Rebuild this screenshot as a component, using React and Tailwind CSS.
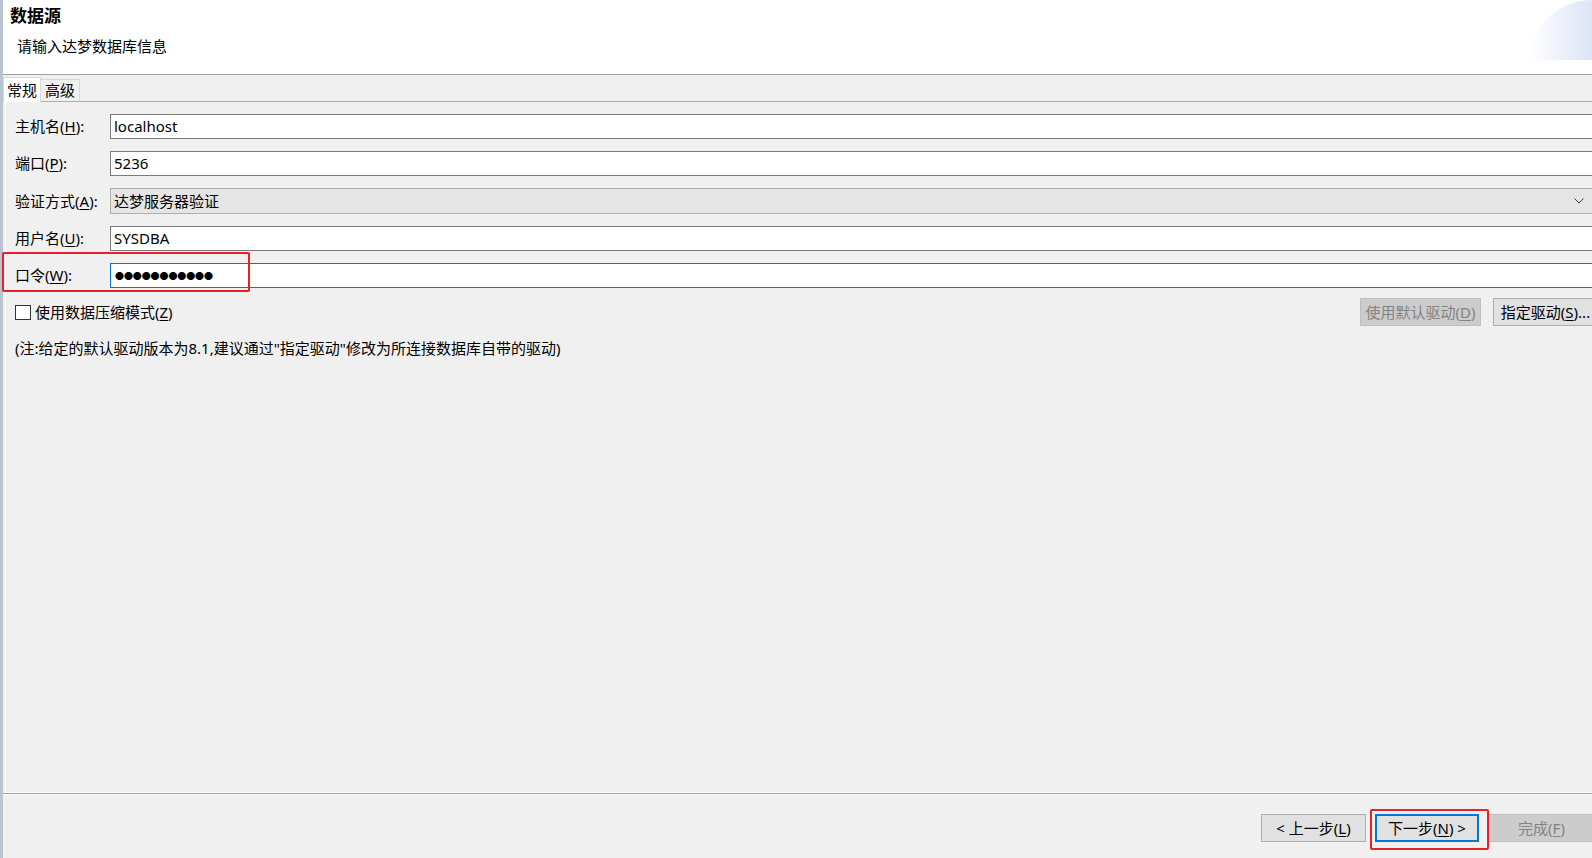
import React from 'react';

const FONT = { fontFamily: '"Noto Sans", "Noto Sans CJK SC", sans-serif' };
const DOTS = { fontFamily: '"Noto Sans CJK SC", sans-serif' };

function Key({ children }) {
    return <u className="underline underline-offset-2">{children}</u>;
}

function Label({ text, k }) {
    return (
        <div className="w-[95px] shrink-0 text-[15px] text-black whitespace-nowrap">
            {text}(<Key>{k}</Key>):
        </div>
    );
}

function TextRow({ text, k, value, focused, children }) {
    return (
        <div className="relative flex items-center h-[25px]">
            {children}
            <Label text={text} k={k} />
            <div
                className={
                    'flex-1 h-[25px] bg-white border flex items-center pl-[3px] text-[15px] text-black ' +
                    (focused ? 'border-[#0078d7]' : 'border-[#7a7a7a]')
                }
            >
                {value}
            </div>
        </div>
    );
}

function Button({ children, disabled, primary, className = '' }) {
    let cls = 'h-[28px] flex items-center justify-center text-[15px] whitespace-nowrap ';
    if (disabled) cls += 'bg-[#cccccc] border border-[#bfbfbf] text-[#838383] ';
    else if (primary) cls += 'bg-[#e1e1e1] border-2 border-[#0078d7] text-black ';
    else cls += 'bg-[#e1e1e1] border border-[#adadad] text-black ';
    return <div className={cls + className}>{children}</div>;
}

export default function App() {
    return (
        <div className="w-[1592px] h-[858px] overflow-hidden bg-[#f0f0f0] flex" style={FONT}>
            <div className="w-[3px] shrink-0 bg-[#b9c4d0]" />
            <div className="w-[1597px] shrink-0 flex flex-col">
                {/* header */}
                <div className="relative h-[75px] shrink-0 bg-white border-b border-[#a0a0a0] pl-[7px]">
                    <div className="absolute right-[8px] top-0 w-[62px] h-[60px] rounded-tl-[100%_100%] bg-gradient-to-r from-white to-[#dde4f6]" />
                    <div className="pt-[4px] text-[17px] font-bold text-black leading-[24px]">数据源</div>
                    <div className="pl-[7px] pt-[8px] text-[15px] text-black leading-[20px]">请输入达梦数据库信息</div>
                </div>

                {/* tabs */}
                <div className="h-[27px] shrink-0 flex items-end">
                    <div className="h-[25px] px-[3px] bg-white border border-b-0 border-[#d9d9d9] flex items-center text-[15px] text-black">常规</div>
                    <div className="h-[23px] px-[4px] bg-[#f0f0f0] border border-l-0 border-[#d9d9d9] border-b-[#adadad] flex items-center text-[15px] text-black">高级</div>
                    <div className="flex-1 border-b border-[#adadad]" />
                </div>

                {/* content panel */}
                <div className="flex-1 ml-[2px] border-l border-b border-white bg-[#f0f0f0] pl-[9px] pr-[2px] pt-[12px] flex flex-col">
                    <div className="flex flex-col gap-[12px]">
                        <TextRow text="主机名" k="H" value="localhost" />
                        <TextRow text="端口" k="P" value="5236" />
                        <div className="flex items-center h-[26px]">
                            <Label text="验证方式" k="A" />
                            <div className="flex-1 h-[26px] bg-[#e5e5e5] border border-[#adadad] flex items-center pl-[3px] pr-[13px] text-[15px] text-black">
                                <span className="flex-1">达梦服务器验证</span>
                                <svg width="10" height="6" viewBox="0 0 10 6" fill="none">
                                    <path d="M0.5 0.5 L5 5 L9.5 0.5" stroke="#404040" strokeWidth="1" />
                                </svg>
                            </div>
                        </div>
                        <TextRow text="用户名" k="U" value="SYSDBA" />
                        <TextRow
                            text="口令"
                            k="W"
                            focused
                            value={
                                <span className="text-[9px] tracking-[-0.1px] leading-none pl-[1px]" style={DOTS}>
                                    ●●●●●●●●●●●
                                </span>
                            }
                        >
                            <div className="absolute -left-[13px] -top-[11px] w-[248px] h-[40px] border-2 border-[#e8202a] rounded-[2px] pointer-events-none" />
                        </TextRow>
                    </div>

                    <div className="mt-[10px] h-[28px] flex items-center">
                        <div className="w-[16px] h-[15px] bg-white border border-[#333333]" />
                        <span className="ml-[4px] text-[15px] text-black">
                            使用数据压缩模式(<Key>Z</Key>)
                        </span>
                        <div className="flex-1" />
                        <Button disabled className="w-[121px]">
                            使用默认驱动(<Key>D</Key>)
                        </Button>
                        <Button className="w-[105px] ml-[12px]">
                            指定驱动(<Key>S</Key>)...
                        </Button>
                    </div>

                    <div className="mt-[12px] text-[15px] text-black leading-[20px]">
                        (注:给定的默认驱动版本为8.1,建议通过"指定驱动"修改为所连接数据库自带的驱动)
                    </div>
                </div>

                {/* separator */}
                <div className="h-[2px] shrink-0 border-t border-[#a0a0a0] border-b border-b-white" />

                {/* buttons */}
                <div className="h-[63px] shrink-0 flex justify-end items-start pt-[19px] pr-[6px] gap-[9px]">
                    <Button className="w-[105px]">
                        &lt; 上一步(<Key>L</Key>)
                    </Button>
                    <div className="relative">
                        <div className="absolute -left-[5px] -top-[5px] -right-[10px] -bottom-[8px] border-2 border-[#e8202a] rounded-[2px]" />
                        <Button primary className="w-[104px]">
                            下一步(<Key>N</Key>) &gt;
                        </Button>
                    </div>
                    <Button disabled className="w-[105px] ml-[1px]">
                        完成(<Key>F</Key>)
                    </Button>
                </div>
            </div>
        </div>
    );
}
